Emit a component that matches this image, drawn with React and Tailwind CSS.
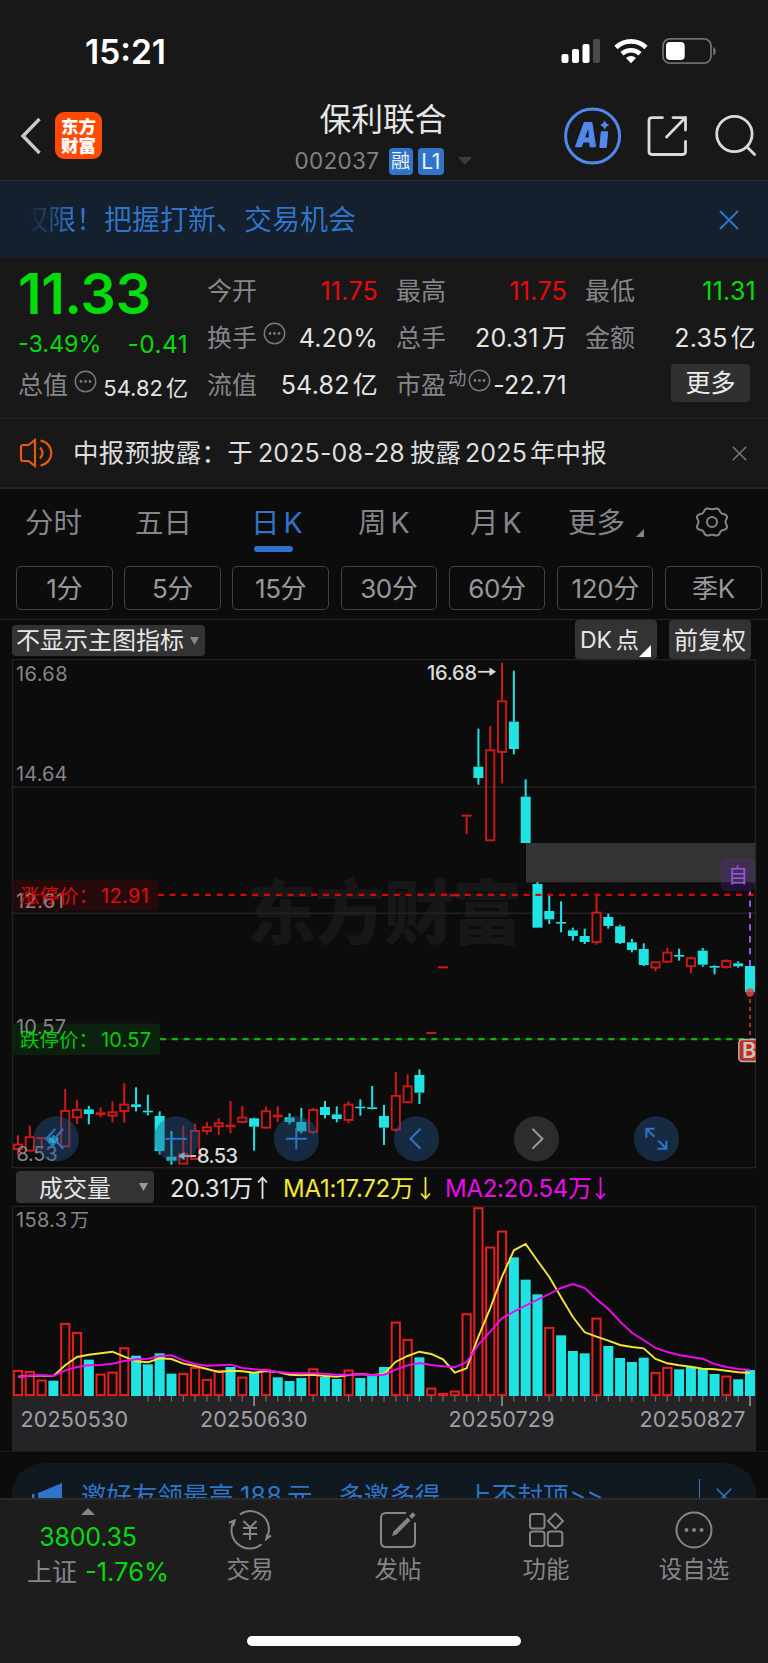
import React from "react";

const BLUE = "#2f74c8";
const GRAY = "#85858b";
const CYAN = "#20e3e3";
const RED = "#d01818";

const X0 = 18;
const STEP = 11.806;
const cx = (i) => X0 + i * STEP;

// [colour, high, body top, body bottom, low] in page pixels
const A = (c, ...v) => [c, ...v.map((n) => 1050 + n / 3)];
const B = (c, ...v) => [c, ...v.map((n) => 860 + n / 3)];
const C = (c, ...v) => [c, ...v.map((n) => 650 + n / 3)];

const candles = [
  A("r", 256, 282, 298, 315), A("r", 227, 260, 303, 303), A("r", 261, 261, 268, 300), A("c", 256, 262, 280, 286),
  A("r", 117, 181, 290, 292), A("r", 149, 178, 203, 222), A("c", 168, 178, 192, 223), A("r", 172, 187, 195, 202),
  A("r", 154, 185, 198, 217), A("r", 99, 162, 184, 218), A("c", 112, 163, 171, 184), A("c", 134, 182, 187, 196),
  A("c", 184, 198, 303, 313), A("c", 243, 320, 332, 344), A("r", 227, 310, 342, 342), A("r", 221, 241, 328, 328),
  A("r", 216, 230, 244, 254), A("r", 205, 218, 230, 255), A("r", 153, 224, 232, 250), A("r", 168, 201, 217, 220),
  A("c", 203, 205, 230, 302), A("r", 170, 182, 234, 236), A("r", 169, 194, 202, 217), A("c", 190, 202, 216, 223),
  A("c", 174, 216, 244, 250), A("r", 174, 178, 247, 252), A("c", 153, 171, 195, 205), A("c", 169, 193, 207, 217),
  A("r", 154, 162, 211, 220), A("c", 148, 170, 174, 197), A("c", 108, 172, 177, 178), A("c", 165, 198, 233, 285),
  A("r", 66, 136, 240, 246), B("r", 643, 677, 728, 728), B("c", 628, 645, 698, 732), B("r", 516, 516, 522, 522),
  B("r", 319, 319, 325, 325), B("r", 103, 103, 109, 109), C("r", 494, 494, 500, 552), C("c", 236, 350, 384, 404),
  C("r", 228, 299, 572, 572), C("r", 38, 152, 307, 400), C("c", 62, 215, 297, 313), C("c", 388, 440, 579, 579),
  B("c", 66, 72, 203, 203), B("c", 108, 153, 178, 192), B("c", 124, 186, 190, 217), B("c", 203, 211, 228, 242),
  B("c", 206, 228, 246, 252), B("r", 106, 156, 247, 254), B("c", 161, 171, 198, 206), B("c", 194, 199, 249, 252),
  B("c", 237, 247, 270, 277), B("c", 250, 267, 315, 318), B("r", 305, 305, 324, 334), B("r", 263, 276, 306, 309),
  B("c", 266, 285, 289, 302), B("r", 290, 293, 320, 340), B("c", 264, 272, 314, 320), B("c", 316, 318, 323, 343),
  B("r", 298, 301, 322, 326), B("c", 304, 310, 319, 323), B("c", 318, 318, 396, 396),
];

const volumes =
  "r600 r603 r629 c632 r459 r486 c569 r611 r605 r532 c557 c583 c550 c611 r609 r591 r627 r600 c591 r620 c608 r597 c622 c633 c624 r595 c621 c627 r599 c624 c615 c591 r455 r507 c562 r653 r669 r662 r430 r112 r230 r182 c262 c329 c373 r471 c496 c543 c550 r443 c528 c564 c576 c563 r606 r591 c598 c591 c595 c612 r617 c628 c600"
    .split(" ")
    .map((s) => [s[0], 1170 + Number(s.slice(1)) / 3]);

const line = (s) => s.split(" ").map((v, i) => `${cx(i).toFixed(1)},${(1170 + v / 3).toFixed(1)}`).join(" ");
const ma1 = line("620 617 617 618 586 561 554 550 545 560 574 577 565 567 581 588 597 606 602 604 608 603 606 614 616 614 618 620 615 612 615 612 575 558 545 552 568 608 595 500 415 320 241 222 272 321 382 441 487 500 512 525 531 535 567 580 586 590 596 598 602 607 609");
const ma2 = line("620 617 616 618 601 591 586 585 581 573 568 566 558 556 571 582 587 586 584 594 598 601 606 609 610 610 611 614 614 613 616 614 599 586 579 585 589 592 576 524 485 445 425 407 389 372 354 342 354 387 417 455 488 511 534 546 555 561 566 582 591 597 600");

function Candle({ d, i }) {
  const [c, h, t, b, l] = d;
  const x = cx(i);
  const col = c === "r" ? RED : CYAN;
  const thin = b - t < 3.4;
  return (
    <g>
      {t - h > 0.3 && <rect x={x - 1} y={h} width="2" height={t - h} fill={col} />}
      {l - b > 0.3 && <rect x={x - 1} y={b} width="2" height={l - b} fill={col} />}
      {c === "c" || thin ? (
        <rect x={x - 5} y={t} width="10" height={Math.max(b - t, 1.6)} fill={col} />
      ) : (
        <rect x={x - 4.1} y={t + 0.6} width="8.2" height={b - t - 1} fill="none" stroke={col} strokeWidth="1.9" />
      )}
    </g>
  );
}

function T({ x, y, w, size = 20, fill = GRAY, children, weight = 400 }) {
  return (
    <text x={x} y={y} fontSize={size} fill={fill} fontWeight={weight} textLength={w} lengthAdjust="spacing">
      {children}
    </text>
  );
}

function RoundButton({ x, gray, children }) {
  return (
    <g transform={`translate(${x} 1138.8)`} fill="none" stroke={gray ? "#98989c" : BLUE} strokeWidth="2">
      <circle r="22.6" fill={gray ? "#2f2f32" : "#25588f"} fillOpacity={gray ? 0.93 : 0.42} stroke="none" />
      {children}
    </g>
  );
}

function PriceChart() {
  return (
    <svg className="block shrink-0" width="768" height="510" viewBox="0 659 768 510">
      <defs>
        <clipPath id="plot"><rect x="12" y="659" width="744" height="510" /></clipPath>
      </defs>
      <text x="247" y="939" fontSize="70" fontWeight="900" fill="#171717" textLength="275" fontFamily="Noto Sans CJK SC, sans-serif">东方财富</text>
      <g fill="none" stroke="#222223" strokeWidth="1.4">
        <rect x="12.5" y="659.7" width="743" height="508" />
        <path d="M12.5 787H755.5M12.5 913.3H755.5M12.5 1039.3H755.5" />
      </g>
      <rect x="526" y="843" width="229.5" height="39.3" fill="#333333" />
      {candles.map((d, i) => <Candle key={i} d={d} i={i} />)}
      <path d="M157.8 894.8H754" stroke="#d80808" strokeWidth="2.2" strokeDasharray="6 5.8" />
      <path d="M160 1039.2H754" stroke="#06b80a" strokeWidth="2.2" strokeDasharray="6 5.8" />
      <rect x="12.5" y="879.4" width="145.5" height="31.2" rx="3" fill="#260a0b" />
      <rect x="12.5" y="1023.5" width="147.5" height="31.5" rx="3" fill="#0b200d" />
      <T x="16" y="681" w="51.5">16.68</T>
      <T x="16" y="780.5" w="51.5">14.64</T>
      <T x="16" y="907.5" w="48">12.61</T>
      <T x="16" y="1034" w="50">10.57</T>
      <T x="16.5" y="1161" w="41">8.53</T>
      <T x="20" y="902.7" w="78" size={19.5} fill="#e00a0a">涨停价：</T>
      <T x="101" y="902.7" w="48" fill="#e00a0a">12.91</T>
      <T x="20" y="1046.5" w="78" size={19.5} fill="#08cc0c">跌停价：</T>
      <T x="101" y="1046.5" w="50" fill="#08cc0c">10.57</T>

      <T x="427" y="679.500" w="50" fill="#dcdcdc" weight={500}>16.68</T>
      <path d="M478 671.8H490" stroke="#dcdcdc" strokeWidth="1.8" />
      <path d="M489.500 667.500L496 671.800L489.500 676Z" fill="#dcdcdc" />
      <path d="M183 1156H196" stroke="#dcdcdc" strokeWidth="1.8" />
      <path d="M184.500 1152L178 1156L184.500 1160Z" fill="#dcdcdc" />
      <T x="197" y="1163.200" w="41" fill="#dcdcdc" weight={500}>8.53</T>

      <path d="M750 891.500V966" stroke="#9a55e6" strokeWidth="2" strokeDasharray="6.300 5.600" strokeDashoffset="3" />
      <rect x="720.500" y="858" width="35" height="33" rx="6" fill="#6b2fb0" fillOpacity="0.22" />
      <T x="728" y="882.500" size={20} fill="#9b52e8">自</T>
      <path d="M750 999V1037" stroke="#b32d22" strokeWidth="2" strokeDasharray="4 4" />
      <circle cx="750" cy="992.500" r="4.200" fill="#d84a3a" fillOpacity="0.85" />
      <g clipPath="url(#plot)">
        <rect x="738.800" y="1039.500" width="24" height="22" rx="3.500" fill="#bd2f20" stroke="#b9b0ae" strokeWidth="1.500" />
        <T x="742" y="1058" size={21.500} fill="#c9c3c2" weight={600}>B</T>
      </g>

      <RoundButton x="56.300"><path d="M-1 -10L-10 0L-1 10M7 -10L-2 0L7 10" /></RoundButton>
      <RoundButton x="176.500"><path d="M-11 0H10.500" /></RoundButton>
      <RoundButton x="296.300"><path d="M-10.500 0H10.500M0 -10.500V10.500" /></RoundButton>
      <RoundButton x="416.500"><path d="M4 -10L-6 0L4 10" /></RoundButton>
      <RoundButton x="536.400" gray><path d="M-4 -10L6 0L-4 10" /></RoundButton>
      <RoundButton x="656.400"><path d="M-2 -10H-10V-1M-10 -10L-2 -2M10 2V10H1M10 10L2 2" /></RoundButton>
    </svg>
  );
}

function VolumeChart() {
  return (
    <svg className="block shrink-0" width="768" height="246" viewBox="0 1205 768 246">
      <path d="M12.500 1396V1206.300H755.500V1396" fill="none" stroke="#222223" strokeWidth="1.300" />
      <rect x="12" y="1396" width="744" height="55" fill="#242427" />
      {volumes.map(([c, t], i) =>
        c === "c" ? (
          <rect key={i} x={cx(i) - 5} y={t} width="10" height={1396 - t} fill={CYAN} />
        ) : (
          <rect key={i} x={cx(i) - 4.1} y={t + 0.9} width="8.200" height={Math.max(1394.2 - t, 0.6)} fill="none" stroke="#e81e1e" strokeWidth="2" />
        )
      )}
      {volumes.map((_, i) =>
        i < 11 ? null : (
          <rect key={i} x={cx(i) - (i % 21 === 20 ? 0.9 : 0.6)} y="1396" width={i % 21 === 20 ? 1.8 : 1.2} height={i % 21 === 20 ? 10 : 5.500} fill={i % 21 === 20 ? "#88888b" : "#6c6c70"} />
        )
      )}
      <polyline points={ma1} fill="none" stroke="#f4e636" strokeWidth="1.900" />
      <polyline points={ma2} fill="none" stroke="#ee0aee" strokeWidth="1.900" />
      <T x="16" y="1226.500" w="51">158.3</T>
      <T x="70" y="1226.500" size={19}>万</T>
      <g>
        <T x="20.500" y="1427" w="107.500" size={21.500} fill="#a0a0a4">20250530</T>
        <T x="200" y="1427" w="107.500" size={21.500} fill="#a0a0a4">20250630</T>
        <T x="448.500" y="1427" w="106" size={21.500} fill="#a0a0a4">20250729</T>
        <T x="639.500" y="1427" w="106" size={21.500} fill="#a0a0a4">20250827</T>
      </g>
    </svg>
  );
}

const Dots = ({ className = "" }) => (
  <svg className={"shrink-0 " + className} width="23" height="23" viewBox="0 0 23 23" fill="none" stroke="#77777c" strokeWidth="1.500">
    <circle cx="11.500" cy="11.500" r="10.200" />
    <g fill="#77777c" stroke="none"><circle cx="7" cy="11.500" r="1.400" /><circle cx="11.500" cy="11.500" r="1.400" /><circle cx="16" cy="11.500" r="1.400" /></g>
  </svg>
);

const Cross = ({ size, color }) => (
  <svg width={size} height={size} viewBox="0 0 20 20" fill="none" stroke={color} strokeWidth="2"><path d="M1 1L19 19M19 1L1 19" /></svg>
);

function Cell({ label, value, tone = "text-[#e4e4e6]", extra }) {
  return (
    <div className="flex h-[47px] items-center">
      <span className="-ml-[1px] text-[25px] text-[#85858b]">{label}</span>
      {extra}
      <span className={"-mr-[1px] ml-auto text-[25px] tracking-[0.25px] " + tone}>{value}</span>
    </div>
  );
}

const Num = ({ n, u }) => <>{n}<span className="ml-[3px]">{u}</span></>;

function Header() {
  return (
    <header className="flex h-[181px] shrink-0 flex-col border-b border-[#2c2c2c] bg-[#181818]">
      <div className="flex h-[91px] shrink-0 pl-[85px]">
        <span className="mt-[35px] w-[100px] text-[33.500px] leading-[34px] font-semibold tracking-[0px] text-white">15:21</span>
        <svg className="mt-[36px] ml-[375px]" width="160" height="30" viewBox="560 36 160 30">
          <g fill="#fff">
            <rect x="561.500" y="54" width="7" height="9" rx="2" />
            <rect x="572" y="49" width="7" height="14" rx="2" />
            <rect x="582.500" y="44" width="7" height="19" rx="2" />
            <rect x="593" y="39" width="7" height="24" rx="2" fill="#4a4a4a" />
          </g>
          <g fill="none" stroke="#fff" strokeWidth="4.600">
            <path d="M616 47.500A21.500 21.500 0 0 1 646 47.500" />
            <path d="M622 53.700A13.500 13.500 0 0 1 640 53.700" />
          </g>
          <path d="M631 63.300L626 58A7.600 7.600 0 0 1 636 58Z" fill="#fff" />
          <rect x="663" y="38.800" width="48" height="24.400" rx="7" fill="none" stroke="#6e6e6e" strokeWidth="1.800" />
          <rect x="666" y="42" width="18.700" height="18" rx="4" fill="#fff" />
          <path d="M713.200 47C716.800 48.500 716.800 54 713.200 55.500Z" fill="#6e6e6e" />
        </svg>
      </div>
      <div className="flex h-[89px]">
        <svg className="mt-[25px] ml-[20px]" width="22" height="40" viewBox="0 0 22 40" fill="none" stroke="#c9c9c9" strokeWidth="3.400"><path d="M19.500 3L3 20L19.500 37" /></svg>
        <div className="mt-[21px] ml-[13px] flex h-[47px] w-[47px] flex-col items-center justify-center rounded-[9px] bg-[#ff4a06] text-[17.500px] leading-[19px] font-black text-white">
          <span>东方</span><span>财富</span>
        </div>
        <div className="ml-[181px] flex w-[200px] flex-col items-center">
          <h1 className="mt-[11px] text-[31.8px] leading-[36px] font-normal text-[#e6e6e6]">保利联合</h1>
          <div className="mt-[9px] flex h-[28px] items-center text-[23px] leading-none text-[#818186]">
            <span className="w-[86px] text-[22.5px] tracking-[0.3px]">002037</span>
            <span className="ml-[8px] flex h-[27px] w-[24px] items-center justify-center rounded-[4px] bg-[#2f74c8] text-[19px] text-[#f0f0f0]">融</span>
            <span className="ml-[5px] flex h-[27px] w-[26px] items-center justify-center rounded-[4px] bg-[#2f74c8] text-[21px] tracking-[-0.5px] text-[#f0f0f0]">L1</span>
            <svg className="ml-[14px]" width="14" height="8" viewBox="0 0 14 8"><path d="M0 0H14L7 8Z" fill="#3c3c3e" /></svg>
          </div>
        </div>
        <svg className="mt-[15px] ml-[81px]" width="204" height="60" viewBox="564 106 204 60" fill="none">
          <circle cx="592.600" cy="136" r="27" stroke="#5089ee" strokeWidth="3" />
          <path fillRule="evenodd" d="M583.500 123Q584 122 585 122H591Q592.300 122 592.500 123.300L596 146Q596.100 147.200 595 147.200H590.700Q589.600 147.200 589.500 146L589.200 142.500H583.500L582.200 146Q581.800 147.200 580.700 147.200H576Q574.600 147.200 575.200 146ZM588.200 129L585.200 137.500H588.900Z" fill="#5089ee" />
          <path d="M601.700 131.300H607.300Q608.300 131.300 608.200 132.300L606.800 147Q606.700 148 605.700 148H600.300Q599.200 148 599.400 147L600.700 132.300Q600.800 131.300 601.700 131.300Z" fill="#5089ee" />
          <path d="M604.700 120.300Q606 124 609.400 125Q606 126 604.700 129.700Q603.400 126 600 125Q603.400 124 604.700 120.300Z" fill="#5089ee" />
          <g stroke="#dadada" strokeWidth="2.800" strokeLinecap="round">
            <path d="M662.500 117.600H652Q649 117.600 649 120.600V151.500Q649 154.500 652 154.500H682.500Q685.500 154.500 685.500 151.500V141.500M673 117.600H685.500V130M685.500 117.600L666.500 137" />
            <circle cx="734.400" cy="134" r="17.700" />
            <path d="M747 147L754.600 154.600" />
          </g>
        </svg>
      </div>
    </header>
  );
}

function Quote() {
  return (
    <section className="grid h-[161px] shrink-0 grid-cols-4 gap-x-[20px] border-b border-[#252525] bg-[#181818] pr-[13px] pl-[19px] leading-none whitespace-nowrap">
      <div className="flex flex-col pt-[10px] text-[#05dc0b]">
        <span className="-ml-[1px] h-[56px] text-[56px] leading-[52px] font-semibold tracking-[-0.5px]">11.33</span>
        <div className="-ml-[1px] flex h-[39px] items-center justify-between text-[23.300px]"><span>-3.49%</span><span className="mt-[1px] text-[24.500px] tracking-[0.4px]">-0.41</span></div>
        <div className="flex h-[45px] items-center">
          <span className="-ml-[1px] text-[25px] text-[#85858b]">总值</span>
          <Dots className="mb-[9px] ml-[6px]" />
          <span className="mt-[5px] ml-auto text-[22px] text-[#e4e4e6]"><Num n="54.82" u="亿" /></span>
        </div>
      </div>
      <div className="pt-[10px]">
        <Cell label="今开" value="11.75" tone="text-[#e80a0a]" />
        <Cell label="换手" value="4.20%" extra={<Dots className="mb-[10px] ml-[6px]" />} />
        <Cell label="流值" value={<Num n="54.82" u="亿" />} />
      </div>
      <div className="pt-[10px]">
        <Cell label="最高" value="11.75" tone="text-[#e80a0a]" />
        <Cell label="总手" value={<Num n="20.31" u="万" />} />
        <Cell label="市盈" value="-22.71" extra={<><span className="mb-[15px] ml-[2px] text-[18.5px] text-[#85858b]">动</span><Dots className="mb-[10px] ml-[1px]" /></>} />
      </div>
      <div className="pt-[10px]">
        <Cell label="最低" value="11.31" tone="text-[#05dc0b]" />
        <Cell label="金额" value={<Num n="2.35" u="亿" />} />
        <div className="mt-[2px] ml-auto mr-[5px] flex h-[38px] w-[79px] items-center justify-center rounded-[4px] bg-[#303031] text-[25px] text-[#ececee]">更多</div>
      </div>
    </section>
  );
}

const tabs = [["分时", "w-[56px] ml-[25px]"], ["五日", "w-[56px] ml-[54px]"], ["日 K", "w-[48px] ml-[60px] text-[#2f74c8]"], ["周 K", "w-[52px] ml-[59px]"], ["月 K", "w-[48px] ml-[60px]"], ["更多", "w-[57px] ml-[50px]"]];

function Periods() {
  return (
    <section className="h-[131px] shrink-0 border-b border-[#242425] bg-[#0c0c0c]">
      <div className="flex h-[77px] text-[28.500px] leading-[30px] whitespace-nowrap text-[#85858b]">
        {tabs.map(([t, c], i) => (
          <div key={t} className={"flex shrink-0 flex-col pt-[19px] " + c}>
            <span className={t.includes(" ") ? "tracking-[-0.5px] [word-spacing:-3px]" : ""}>{t}</span>
            {i === 2 && <span className="mt-[8px] ml-[3px] h-[6px] w-[39px] rounded-full bg-[#2f74c8]" />}
          </div>
        ))}
        <svg className="mt-[40px] ml-[11px]" width="8" height="8" viewBox="0 0 8 8"><path d="M8 0V8H0Z" fill="#85858b" /></svg>
        <svg className="mt-[17px] ml-[51px]" width="34" height="32" viewBox="-17 -16 34 32" fill="none" stroke="#85858b" strokeWidth="2" strokeLinejoin="round">
          <path d="M-4 -13.500Q0 -12 4 -13.500Q7 -14 8 -10.500Q9 -8 13 -7.500Q16 -6 14.500 -3Q12.500 0 14.500 3Q16 6 13 7.500Q9 8 8 10.500Q7 14 4 13.500Q0 12 -4 13.500Q-7 14 -8 10.500Q-9 8 -13 7.500Q-16 6 -14.500 3Q-12.500 0 -14.500 -3Q-16 -6 -13 -7.500Q-9 -8 -8 -10.500Q-7 -14 -4 -13.500Z" />
          <circle r="5" />
        </svg>
      </div>
      <div className="flex gap-[11.700px] pl-[16px] text-[26px] text-[#98989c]">
        {["1分", "5分", "15分", "30分", "60分", "120分", "季K"].map((t) => (
          <div key={t} className="flex h-[44px] w-[96.500px] shrink-0 items-center justify-center rounded-[5px] border-[1.500px] border-[#424244] pt-[2px] leading-none tracking-[-0.4px]">{t}</div>
        ))}
      </div>
    </section>
  );
}

const Arrow = ({ up, color, className }) => (
  <svg className={className} width="11" height="24" viewBox="0 0 11 24" fill="none" stroke={color} strokeWidth="1.800">
    <path d={up ? "M5.500 23V1.500M1 6.500L5.500 1.500L10 6.500" : "M5.500 1V22.500M1 17.500L5.500 22.500L10 17.500"} />
  </svg>
);

function NavItem({ label, children }) {
  return (
    <div className="flex w-[148px] flex-col items-center pt-[9px] text-[23.500px] leading-[28px] text-[#85858b]">
      <svg width="46" height="42" viewBox="-23 -21 46 42" fill="none" stroke="#85858b" strokeWidth="2">{children}</svg>
      <span className="mt-[5px]">{label}</span>
    </div>
  );
}

export default function App() {
  return (
    <div className="flex h-[1663px] w-[768px] flex-col overflow-hidden bg-[#0c0c0c] font-[Inter,'Noto_Sans_CJK_SC',sans-serif]">
      <Header />
      <div className="flex h-[77px] shrink-0 items-center bg-[#15202f] pr-[29px] pl-[20px]">
        <span className="text-[28px] leading-none text-[#2f74c8] [mask-image:linear-gradient(to_right,transparent_8px,black_52px)]">权限！把握打新、交易机会</span>
        <span className="ml-auto"><Cross size="20" color={BLUE} /></span>
      </div>
      <Quote />
      <div className="flex h-[70px] shrink-0 items-center border-b-2 border-[#242425] bg-[#181818] pr-[21px] pl-[19px] text-[25.500px] whitespace-nowrap text-[#dededf]">
        <svg width="34" height="30" viewBox="0 0 34 30" fill="none" stroke="#e8590c" strokeWidth="2.200">
          <path d="M16 2V28L9.500 23H4Q2 23 2 21V9Q2 7 4 7H9.500ZM21 9.500Q26 15 21 20.500M21.500 2.500C36 5.500 36 24.500 21.500 27.500" />
        </svg>
        <span className="ml-[20px] leading-none tracking-[0.2px]">中报预披露：于</span>
        <span className="ml-[5px] w-[151px] text-[25px] leading-none tracking-[0.15px]">2025-08-28</span>
        <span className="ml-[1px] leading-none">披露</span>
        <span className="ml-[4px] w-[63px] text-[25px] leading-none tracking-[0.2px]">2025</span>
        <span className="ml-[2px] leading-none tracking-[0.2px]">年中报</span>
        <span className="ml-auto"><Cross size="15" color="#77777c" /></span>
      </div>
      <Periods />
      <div className="flex h-[39px] shrink-0 pr-[17px] pl-[12px] text-[24px] leading-none whitespace-nowrap text-[#e6e6e8]">
        <div className="mt-[5px] flex h-[31px] w-[193px] items-center rounded-[4px] bg-[#333334] pl-[4px]">
          <span className="mt-[1px]">不显示主图指标</span>
          <svg className="ml-[6px]" width="9" height="8" viewBox="0 0 9 8"><path d="M0 0H9L4.500 8Z" fill="#85858b" /></svg>
        </div>
        <div className="ml-auto flex h-[39px] w-[82px] items-center rounded-[4px] bg-[#333334] pt-[2px] pl-[5px]">
          <span className="text-[23px]">DK</span><span className="ml-[4px] text-[23px]">点</span>
          <svg className="mt-[20px]" width="12" height="12" viewBox="0 0 12 12"><path d="M12 0V12H0Z" fill="#fff" /></svg>
        </div>
        <div className="ml-[12px] flex h-[39px] w-[82px] items-center justify-center rounded-[4px] bg-[#333334] pt-[2px]">前复权</div>
      </div>
      <PriceChart />
      <div className="flex h-[36px] shrink-0 items-center pl-[16px] text-[24px] leading-none whitespace-nowrap text-[#e6e6e8]">
        <div className="flex h-[32px] w-[138px] items-center rounded-[4px] bg-[#333334] pl-[23px]">
          <span className="mt-[3px]">成交量</span>
          <svg className="ml-[28px]" width="9" height="8" viewBox="0 0 9 8"><path d="M0 0H9L4.500 8Z" fill="#9a9a9e" /></svg>
        </div>
        <span className="mt-[3px] ml-[16px] w-[82px] tracking-[-0.200px]">20.31万</span>
        <Arrow up color="#e6e6e8" className="mt-[2px] ml-[5px]" />
        <span className="mt-[3px] ml-[15px] w-[131px] tracking-[-0.250px] text-[#f4e636]">MA1:17.72万</span>
        <Arrow color="#f4e636" className="mt-[1px] ml-[6px]" />
        <span className="mt-[3px] ml-[14px] w-[144px] tracking-[-0.300px] text-[#ee0aee]">MA2:20.54万</span>
        <Arrow color="#ee0aee" className="mt-[1px] ml-[6px]" />
      </div>
      <VolumeChart />
      <div className="flex h-[47px] shrink-0 flex-col overflow-hidden border-t border-[#1c1c1d] px-[12px] pt-[11px]">
        <div className="flex h-[68px] w-[744px] shrink-0 items-center rounded-[32px] bg-[#101820] pb-[2px] pl-[20px] text-[25.500px] leading-none whitespace-nowrap text-[#2f74c8]">
          <svg width="30" height="30" viewBox="0 0 30 30" fill={BLUE}><path d="M0 13H2.500V24H0ZM6 12L30 2V30L6 25Z" /></svg>
          <span className="ml-[19px] w-[153px]">邀好友领最高</span>
          <span className="ml-[6px] w-[44px] text-[25.500px]">188</span>
          <span className="ml-[3px] tracking-[0.1px]">元，多邀多得，上不封顶</span>
          <span className="ml-[1px]">&gt;&gt;</span>
          <span className="ml-auto h-[35px] w-[1.500px] bg-[#2f74c8]" />
          <span className="mr-[24px] ml-[16px]"><Cross size="16" color={BLUE} /></span>
        </div>
      </div>
      <nav className="flex h-[165px] shrink-0 flex-col border-t-2 border-[#2a2a2b] bg-[#1d1d1d]">
        <div className="flex h-[136px]">
          <div className="flex w-[176px] flex-col items-center pt-[8px] text-[25px] leading-[30px] text-[#05dc0b]">
            <svg width="14" height="7" viewBox="0 0 14 7"><path d="M0 7L7 0L14 7Z" fill="#85858b" /></svg>
            <span className="mt-[7px] tracking-[-0.2px]">3800.35</span>
            <div className="mt-[5px] ml-[20px] flex whitespace-nowrap"><span className="mr-[8px] text-[#85858b]">上证</span><span className="text-[25.500px]">-1.76%</span></div>
          </div>
          <NavItem label="交易">
            <path d="M-10 -15.500A18.300 18.300 0 0 1 16.500 8.500M11.500 14.300A18.300 18.300 0 0 1 -16 -9M-21 -7.200L-15.300 -9.500L-16.800 -4M21 5.500L16.300 9L17.500 4" />
            <path d="M-6.500 -9L0 -2.500L6.500 -9M0 -2.500V10M-7 -2H7M-7 4H7" />
          </NavItem>
          <NavItem label="发帖">
            <path d="M8 -17H-12Q-17 -17 -17 -12V12Q-17 17 -12 17H12Q17 17 17 12V-7.500" />
            <path d="M-6 6L-4.500 1.500L9.500 -12.500L12.500 -9.500L-1.500 4.500Z" fill="#85858b" stroke="none" /><path d="M12.500 -12.500L16.300 -16.300" strokeWidth="4" />
          </NavItem>
          <NavItem label="功能">
            <rect x="-16" y="-16" width="14.500" height="14.500" rx="2.500" /><rect x="-16" y="1.500" width="14.500" height="14.500" rx="2.500" /><rect x="1.800" y="1.500" width="14.500" height="14.500" rx="2.500" /><path d="M9.500 -16.500L17 -9L9.500 -1.500L2 -9Z" strokeLinejoin="round" />
          </NavItem>
          <NavItem label="设自选">
            <circle r="17.500" /><g fill="#85858b" stroke="none"><circle cx="-7.500" r="2" /><circle r="2" /><circle cx="7.500" r="2" /></g>
          </NavItem>
        </div>
        <div className="ml-[247px] h-[10px] w-[274px] shrink-0 rounded-full bg-white" />
      </nav>
    </div>
  );
}
